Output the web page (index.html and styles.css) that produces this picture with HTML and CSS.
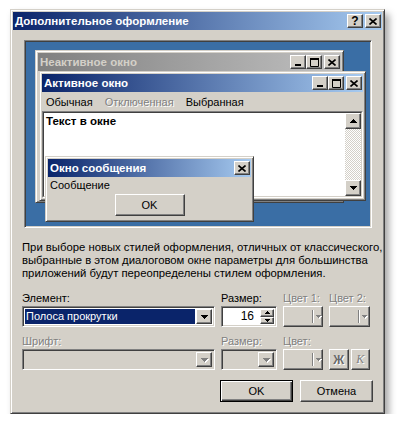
FILE: index.html
```html
<!DOCTYPE html>
<html lang="ru">
<head>
  <meta charset="UTF-8">
  <meta name="viewport" content="width=device-width, initial-scale=1.0">
  <title>Дополнительное оформление</title>
  <link rel="stylesheet" href="styles.css">
</head>
<body>
  <div class="dialog">
    <div class="titlebar">
      <span class="title">Дополнительное оформление</span>
      <div class="caption-btns">
        <span class="cbtn help">?</span>
        <span class="cbtn sep">
          <svg width="8" height="7" viewBox="0 0 8 7"><path d="M0.5 0.5L7.5 6.5M7.5 0.5L0.5 6.5" stroke="#000" stroke-width="1.6"/></svg>
        </span>
      </div>
    </div>

    <div class="content">
      <div class="preview">
        <!-- inactive window -->
        <div class="win inactive">
          <div class="titlebar small">
            <span class="title">Неактивное окно</span>
            <div class="caption-btns">
              <span class="cbtn"><svg width="8" height="7" viewBox="0 0 8 7"><rect x="1" y="5" width="6" height="2"/></svg></span>
              <span class="cbtn"><svg width="9" height="9" viewBox="0 0 9 9"><rect x="0" y="0" width="9" height="2"/><path d="M0.5 1.5h8v7h-8z" fill="none" stroke="#000"/></svg></span>
              <span class="cbtn sep"><svg width="8" height="7" viewBox="0 0 8 7"><path d="M0.5 0.5L7.5 6.5M7.5 0.5L0.5 6.5" stroke="#000" stroke-width="1.6"/></svg></span>
            </div>
          </div>
        </div>

        <!-- active window -->
        <div class="win active">
          <div class="titlebar small">
            <span class="title">Активное окно</span>
            <div class="caption-btns">
              <span class="cbtn"><svg width="8" height="7" viewBox="0 0 8 7"><rect x="1" y="5" width="6" height="2"/></svg></span>
              <span class="cbtn"><svg width="9" height="9" viewBox="0 0 9 9"><rect x="0" y="0" width="9" height="2"/><path d="M0.5 1.5h8v7h-8z" fill="none" stroke="#000"/></svg></span>
              <span class="cbtn sep"><svg width="8" height="7" viewBox="0 0 8 7"><path d="M0.5 0.5L7.5 6.5M7.5 0.5L0.5 6.5" stroke="#000" stroke-width="1.6"/></svg></span>
            </div>
          </div>
          <div class="menubar">
            <span class="menu-item">Обычная</span>
            <span class="menu-item disabled">Отключенная</span>
            <span class="menu-item">Выбранная</span>
          </div>
          <div class="client">
            <div class="client-in">
              <div class="client-text">Текст в окне</div>
              <div class="scrollbar">
                <span class="sbtn"><svg width="7" height="4" viewBox="0 0 7 4"><path d="M3 0h1v1h1v1h1v1h1v1h-7v-1h1v-1h1v-1h1z"/></svg></span>
                <span class="track"></span>
                <span class="sbtn"><svg width="7" height="4" viewBox="0 0 7 4"><path d="M0 0h7v1h-1v1h-1v1h-1v1h-1v-1h-1v-1h-1v-1h-1z"/></svg></span>
              </div>
            </div>
          </div>
        </div>

        <!-- message box -->
        <div class="win msgbox">
          <div class="titlebar small">
            <span class="title">Окно сообщения</span>
            <div class="caption-btns">
              <span class="cbtn"><svg width="8" height="7" viewBox="0 0 8 7"><path d="M0.5 0.5L7.5 6.5M7.5 0.5L0.5 6.5" stroke="#000" stroke-width="1.6"/></svg></span>
            </div>
          </div>
          <div class="msg-text">Сообщение</div>
          <div class="msg-actions">
            <span class="btn msg-ok">OK</span>
          </div>
        </div>
      </div>

      <p class="note">При выборе новых стилей оформления, отличных от классического,<br>выбранные в этом диалоговом окне параметры для большинства<br>приложений будут переопределены стилем оформления.</p>

      <div class="fields">
        <label class="lbl">Элемент:</label>
        <label class="lbl">Размер:</label>
        <label class="lbl off">Цвет 1:</label>
        <label class="lbl off">Цвет 2:</label>

        <div class="combo">
          <span class="combo-value selected">Полоса прокрутки</span>
          <span class="combo-arrow"><svg width="7" height="4" viewBox="0 0 7 4"><path d="M0 0h7v1h-1v1h-1v1h-1v1h-1v-1h-1v-1h-1v-1h-1z"/></svg></span>
        </div>
        <div class="combo spin">
          <span class="combo-value num">16</span>
          <span class="spin-btns">
            <span class="spin-btn"><svg width="5" height="3" viewBox="0 0 5 3"><path d="M2 0h1v1h1v1h1v1h-5v-1h1v-1h1z"/></svg></span>
            <span class="spin-btn"><svg width="5" height="3" viewBox="0 0 5 3"><path d="M0 0h5v1h-1v1h-1v1h-1v-1h-1v-1h-1z"/></svg></span>
          </span>
        </div>
        <div class="btn colorbtn">
          <span class="swatch"></span>
          <span class="color-arrow"><svg width="5" height="3" viewBox="0 0 5 3"><path d="M0 0h5v1h-1v1h-1v1h-1v-1h-1v-1h-1z"/></svg></span>
        </div>
        <div class="btn colorbtn">
          <span class="swatch"></span>
          <span class="color-arrow"><svg width="5" height="3" viewBox="0 0 5 3"><path d="M0 0h5v1h-1v1h-1v1h-1v-1h-1v-1h-1z"/></svg></span>
        </div>

        <label class="lbl off">Шрифт:</label>
        <label class="lbl off">Размер:</label>
        <label class="lbl off">Цвет:</label>
        <span></span>

        <div class="combo disabled">
          <span class="combo-value"></span>
          <span class="combo-arrow"><svg width="7" height="4" viewBox="0 0 7 4"><path d="M0 0h7v1h-1v1h-1v1h-1v1h-1v-1h-1v-1h-1v-1h-1z"/></svg></span>
        </div>
        <div class="combo disabled">
          <span class="combo-value"></span>
          <span class="combo-arrow"><svg width="7" height="4" viewBox="0 0 7 4"><path d="M0 0h7v1h-1v1h-1v1h-1v1h-1v-1h-1v-1h-1v-1h-1z"/></svg></span>
        </div>
        <div class="btn colorbtn">
          <span class="swatch"></span>
          <span class="color-arrow"><svg width="5" height="3" viewBox="0 0 5 3"><path d="M0 0h5v1h-1v1h-1v1h-1v-1h-1v-1h-1z"/></svg></span>
        </div>
        <div class="style-btns">
          <span class="btn sbtn-style bold">Ж</span>
          <span class="btn sbtn-style italic">К</span>
        </div>
      </div>

      <div class="actions">
        <span class="btn default">OK</span>
        <span class="btn">Отмена</span>
      </div>
    </div>
  </div>
</body>
</html>
```

FILE: styles.css
```css
* {
  box-sizing: border-box;
}
body {
  margin: 0;
  background: #fff;
  font-family: "Liberation Sans", Arial, sans-serif;
  font-size: 11px;
  color: #000;
}

/* classic 3d frames */
.dialog,
.win {
  background: #d4d0c8;
  border: 1px solid;
  border-color: #d4d0c8 #404040 #404040 #d4d0c8;
  padding: 2px;
}
.dialog {
  width: 375px;
  margin: 9px 0 0 10px;
  box-shadow: inset 1px 1px #fff, inset -1px -1px #808080, 4px 5px 7px rgba(0, 0, 0, 0.35);
}
.win {
  position: absolute;
  box-shadow: inset 1px 1px #fff, inset -1px -1px #808080;
}
.btn,
.cbtn,
.sbtn,
.combo-arrow,
.spin-btn {
  background: #d4d0c8;
  border: 1px solid;
  border-color: #fff #404040 #404040 #fff;
  box-shadow: inset -1px -1px #808080;
}

.titlebar {
  height: 18px;
  display: flex;
  align-items: center;
  justify-content: space-between;
  padding: 0 1px 0 2px;
  background: linear-gradient(to right, #0a246a, #a6caf0);
  color: #fff;
  font-weight: bold;
  font-size: 11.5px;
}
.inactive .titlebar {
  background: linear-gradient(to right, #808080, #c0c0c0);
  color: #d4d0c8;
}
.caption-btns {
  display: flex;
}
.cbtn {
  width: 16px;
  height: 14px;
  display: flex;
  align-items: center;
  justify-content: center;
  color: #000;
  font-size: 12px;
  font-weight: bold;
}
.cbtn.sep {
  margin-left: 2px;
}
.small .cbtn svg {
  display: block;
}

.content {
  padding: 0 9px 9px;
}

/* preview desktop */
.preview {
  position: relative;
  width: 348px;
  height: 188px;
  margin: 10px 0 0 2px;
  background: #3a6ea5;
  border: 1px solid;
  border-color: #808080 #fff #fff #808080;
  box-shadow: inset 1px 1px #404040, inset -1px -1px #d4d0c8;
}
.inactive {
  left: 10px;
  top: 9px;
  width: 309px;
  height: 153px;
}
.active {
  left: 14px;
  top: 30px;
  width: 327px;
  height: 130px;
}
.msgbox {
  left: 20px;
  top: 115px;
  width: 209px;
}

.menubar {
  height: 19px;
  display: flex;
  align-items: center;
  margin-left: -2px;
}
.menu-item {
  padding: 0 6px;
}
.disabled,
.off {
  color: #808080;
  text-shadow: 1px 1px #fff;
}
.client {
  height: 87px;
  border: 1px solid;
  border-color: #808080 #fff #fff #808080;
}
.client-in {
  height: 100%;
  display: flex;
  background: #fff;
  border: 1px solid;
  border-color: #404040 #d4d0c8 #d4d0c8 #404040;
}
.client-text {
  flex: 1;
  padding: 2px 2px;
  font-weight: bold;
  font-size: 11.5px;
}
.scrollbar {
  width: 16px;
  display: flex;
  flex-direction: column;
}
.sbtn {
  height: 16px;
  display: flex;
  align-items: center;
  justify-content: center;
}
.track {
  flex: 1;
  background: repeating-conic-gradient(#fff 0 25%, #d4d0c8 0 50%) 0 0 / 2px 2px;
}

.msg-text {
  height: 17px;
  line-height: 17px;
  padding-left: 2px;
}
.msg-actions {
  display: flex;
  justify-content: center;
  padding-bottom: 3px;
}
.btn {
  display: flex;
  align-items: center;
  justify-content: center;
}
.msg-ok {
  width: 70px;
  height: 22px;
}

.note {
  margin: 13px 0 0;
  font-size: 11.3px;
  line-height: 13px;
  white-space: nowrap;
}

/* element / size / colour fields */
.fields {
  display: grid;
  grid-template-columns: 193px 56px 40px 41px;
  grid-template-rows: 15px 21px 22px 21px;
  column-gap: 6px;
  margin-top: 11px;
}
.lbl {
  align-self: end;
  line-height: 13px;
  margin-bottom: 1px;
}
.combo {
  display: flex;
  padding: 1px;
  background: #fff;
  border: 1px solid;
  border-color: #808080 #fff #fff #808080;
  box-shadow: inset 1px 1px #404040, inset -1px -1px #d4d0c8;
}
.combo.disabled {
  background: #d4d0c8;
}
.combo-value {
  flex: 1;
  margin: 1px;
  padding-left: 1px;
  line-height: 15px;
}
.combo-value.selected {
  background: #0a246a;
  color: #fff;
}
.combo-value.num {
  text-align: right;
  padding-right: 5px;
  font-size: 12px;
}
.combo-arrow {
  width: 16px;
  margin: 1px 1px 1px 0;
  display: flex;
  align-items: center;
  justify-content: center;
}
.combo-arrow svg {
  margin-top: 1px;
}
.disabled .combo-arrow svg,
.color-arrow svg {
  fill: #808080;
  filter: drop-shadow(1px 1px 0 #fff);
}
.spin-btns {
  width: 14px;
  margin: 1px 1px 1px 0;
  display: flex;
  flex-direction: column;
}
.spin-btn {
  flex: 1;
  display: flex;
  align-items: center;
  justify-content: center;
}
.colorbtn {
  justify-content: flex-start;
  padding: 3px 0;
}
.swatch {
  width: 29px;
  height: 100%;
  border-right: 1px solid #808080;
  box-shadow: 1px 0 #fff;
}
.color-arrow {
  flex: 1;
  display: flex;
  justify-content: center;
  padding-left: 1px;
}
.style-btns {
  display: flex;
  gap: 2px;
}
.sbtn-style {
  flex: 1;
  color: #808080;
  text-shadow: 1px 1px #fff;
  font-size: 12px;
}
.sbtn-style.bold {
  font-weight: bold;
  color: #6a6a6a;
}
.sbtn-style.italic {
  font-style: italic;
  font-family: "Liberation Serif", serif;
}

.actions {
  display: flex;
  justify-content: flex-end;
  gap: 7px;
  margin-top: 10px;
}
.actions .btn {
  width: 73px;
  height: 22px;
}
.btn.default {
  border-color: #000;
  box-shadow: inset 1px 1px #fff, inset -1px -1px #404040, inset -2px -2px #808080;
}
```
